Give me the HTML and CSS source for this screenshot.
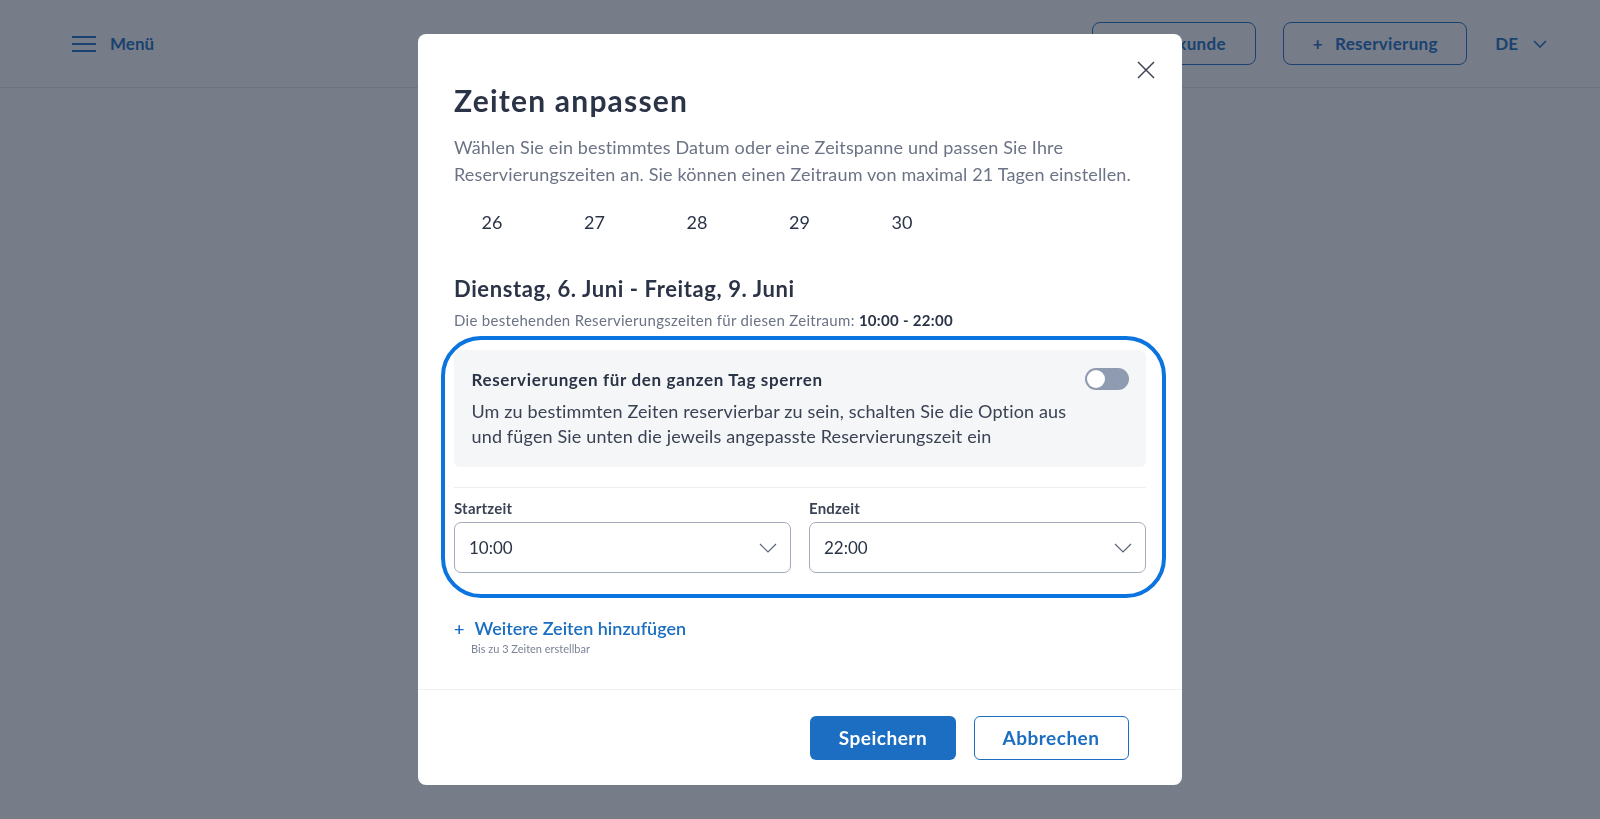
FILE: index.html
```html
<!DOCTYPE html>
<html lang="de">
<head>
  <meta charset="UTF-8">
  <meta name="viewport" content="width=device-width, initial-scale=1.0">
  <title>Zeiten anpassen</title>
  <link rel="stylesheet" href="styles.css">
</head>
<body>
  <!-- Kopfzeile der Seite -->
  <header class="topbar">
    <button class="menu-btn">
      <svg width="24" height="18" viewBox="0 0 24 18"><path d="M0 2h24M0 9h24M0 16h24" stroke="currentColor" stroke-width="2" fill="none"/></svg>
      <span>Menü</span>
    </button>
    <div class="topbar-actions">
      <button class="outline-btn btn-customer"><span class="plus">+</span>Neukunde</button>
      <button class="outline-btn btn-booking"><span class="plus">+</span>Reservierung</button>
      <button class="lang-btn">DE
        <svg width="14" height="8" viewBox="0 0 14 8"><path d="M1 1l6 6 6-6" stroke="currentColor" stroke-width="1.6" fill="none"/></svg>
      </button>
    </div>
  </header>

  <!-- Dialog -->
  <div class="overlay">
    <div class="modal">
      <button class="close-btn" aria-label="Schließen">
        <svg width="18" height="18" viewBox="0 0 18 18"><path d="M1 1l16 16M17 1L1 17" stroke="currentColor" stroke-width="1.5" fill="none"/></svg>
      </button>

      <div class="modal-body">
        <h1 class="modal-title">Zeiten anpassen</h1>
        <p class="modal-desc">Wählen Sie ein bestimmtes Datum oder eine Zeitspanne und passen Sie Ihre Reservierungszeiten an. Sie können einen Zeitraum von maximal 21 Tagen einstellen.</p>

        <div class="days">
          <span>26</span><span>27</span><span>28</span><span>29</span><span>30</span>
        </div>

        <h2 class="range-title">Dienstag, 6. Juni - Freitag, 9. Juni</h2>
        <p class="range-sub">Die bestehenden Reservierungszeiten für diesen Zeitraum: <strong>10:00 - 22:00</strong></p>

        <div class="highlight">
          <div class="block-box">
            <div class="block-head">
              <span class="block-title">Reservierungen für den ganzen Tag sperren</span>
              <span class="toggle"><span class="knob"></span></span>
            </div>
            <p class="block-text">Um zu bestimmten Zeiten reservierbar zu sein, schalten Sie die Option aus und fügen Sie unten die jeweils angepasste Reservierungszeit ein</p>
          </div>

          <div class="divider"></div>

          <div class="time-row">
            <div class="field">
              <label>Startzeit</label>
              <div class="select">10:00
                <svg width="18" height="10" viewBox="0 0 18 10"><path d="M1 1l8 8 8-8" stroke="currentColor" stroke-width="1.2" fill="none"/></svg>
              </div>
            </div>
            <div class="field">
              <label>Endzeit</label>
              <div class="select">22:00
                <svg width="18" height="10" viewBox="0 0 18 10"><path d="M1 1l8 8 8-8" stroke="currentColor" stroke-width="1.2" fill="none"/></svg>
              </div>
            </div>
          </div>
        </div>

        <a class="add-link" href="#"><span class="plus">+</span>Weitere Zeiten hinzufügen</a>
        <p class="add-hint">Bis zu 3 Zeiten erstellbar</p>
      </div>

      <div class="modal-footer">
        <button class="btn-primary">Speichern</button>
        <button class="btn-secondary">Abbrechen</button>
      </div>
    </div>
  </div>
</body>
</html>
```

FILE: styles.css
```css
/* Grundlayout */
body, html {
  margin: 0;
  padding: 0;
  height: 100%;
  font-family: Lato, "Liberation Sans", sans-serif;
  color: #2b3447;
  background: #fff;
  overflow: hidden;
}

button {
  font-family: inherit;
  background: none;
  border: none;
  padding: 0;
  cursor: pointer;
}

/* Kopfzeile */
.topbar {
  height: 87px;
  border-bottom: 1px solid #e3e6ec;
  display: flex;
  align-items: center;
  justify-content: space-between;
  padding: 0 53px 0 72px;
  color: #1b6ec2;
}

.menu-btn {
  display: flex;
  align-items: center;
  gap: 14px;
  color: #1b6ec2;
  font-size: 17px;
  font-weight: 700;
}

.topbar-actions {
  display: flex;
  align-items: center;
}

.outline-btn {
  height: 43px;
  border: 1px solid #1b6ec2;
  border-radius: 8px;
  color: #1b6ec2;
  font-size: 17px;
  font-weight: 700;
  letter-spacing: 0.3px;
  display: flex;
  align-items: center;
  justify-content: center;
}

.outline-btn .plus {
  margin-right: 12px;
}

.btn-customer {
  width: 164px;
  margin-right: 27px;
}

.btn-booking {
  width: 184px;
  margin-right: 28px;
}

.lang-btn {
  display: flex;
  align-items: center;
  gap: 15px;
  color: #1b6ec2;
  font-size: 17px;
  font-weight: 700;
}

/* Abgedunkelter Hintergrund */
.overlay {
  position: fixed;
  inset: 0;
  background: rgba(26, 36, 56, 0.6);
  display: flex;
  align-items: center;
  justify-content: center;
}

/* Dialogfenster */
.modal {
  position: relative;
  width: 764px;
  height: 751px;
  background: #fff;
  border-radius: 8px;
  display: flex;
  flex-direction: column;
  overflow: hidden;
}

.close-btn {
  position: absolute;
  top: 27px;
  right: 27px;
  width: 18px;
  height: 18px;
  color: #3a4254;
}

.close-btn svg {
  display: block;
}

.modal-body {
  flex: 1;
  padding: 48px 36px 0 36px;
}

.modal-title {
  margin: 0;
  font-size: 30px;
  line-height: 36px;
  font-weight: 700;
  letter-spacing: 1.2px;
  color: #2b3447;
}

.modal-desc {
  margin: 16px 0 0;
  font-size: 18px;
  line-height: 26.5px;
  letter-spacing: 0.15px;
  color: #6b7385;
}

.days {
  display: grid;
  grid-template-columns: repeat(5, 76px);
  column-gap: 26.5px;
  margin-top: 23px;
  font-size: 18px;
  line-height: 24px;
  color: #2b3447;
  text-align: center;
}

.range-title {
  margin: 41px 0 0;
  font-size: 22px;
  line-height: 28px;
  font-weight: 700;
  letter-spacing: 0.6px;
}

.range-sub {
  margin: 6.5px 0 0;
  font-size: 15px;
  line-height: 20px;
  letter-spacing: 0.3px;
  color: #6b7385;
}

.range-sub strong {
  color: #2b3447;
}

/* Markierter Bereich */
.highlight {
  position: relative;
  margin-top: 20.5px;
}

.highlight::after {
  content: "";
  position: absolute;
  top: -14px;
  left: -13px;
  right: -20px;
  bottom: -24.5px;
  border: 4px solid #0b74de;
  border-radius: 40px;
  pointer-events: none;
}

.block-box {
  background: #f5f6f8;
  border-radius: 6px;
  padding: 19px 17px 17.5px 17.5px;
}

.block-head {
  display: flex;
  justify-content: space-between;
  align-items: flex-start;
}

.block-title {
  font-size: 17px;
  line-height: 22px;
  font-weight: 700;
  letter-spacing: 0.65px;
}

.toggle {
  width: 44px;
  height: 22px;
  border-radius: 11px;
  background: #8f9bb0;
  margin-top: -1px;
  display: flex;
  align-items: center;
  padding: 0 2px;
  box-sizing: border-box;
}

.knob {
  width: 18px;
  height: 18px;
  border-radius: 50%;
  background: #fff;
}

.block-text {
  margin: 8px 0 0;
  max-width: 615px;
  font-size: 18px;
  line-height: 25px;
  letter-spacing: 0.15px;
  color: #3a4254;
}

.divider {
  height: 1px;
  background: #eceef2;
  margin-top: 20px;
}

.time-row {
  display: grid;
  grid-template-columns: 1fr 1fr;
  column-gap: 18px;
  margin-top: 10px;
}

.field label {
  display: block;
  font-size: 15px;
  line-height: 20px;
  font-weight: 700;
  letter-spacing: 0.2px;
  color: #3a4254;
}

.select {
  margin-top: 4.5px;
  height: 51px;
  box-sizing: border-box;
  border: 1px solid #a3abbb;
  border-radius: 7px;
  padding: 0 13px 0 14px;
  display: flex;
  align-items: center;
  justify-content: space-between;
  font-size: 17px;
  color: #2b3447;
}

.select svg {
  color: #5b6475;
}

.add-link {
  display: inline-block;
  margin-top: 43px;
  font-size: 18px;
  line-height: 24px;
  font-weight: 600;
  color: #1b6ec2;
  text-decoration: none;
}

.add-link .plus {
  margin-right: 10px;
}

.add-hint {
  margin: 1.5px 0 0 17px;
  font-size: 11px;
  line-height: 14px;
  color: #7a8294;
}

/* Fußzeile */
.modal-footer {
  height: 96px;
  border-top: 1px solid #eef0f3;
  box-sizing: border-box;
  padding: 0 53.5px 0 0;
  display: flex;
  justify-content: flex-end;
  align-items: center;
  gap: 17.5px;
}

.btn-primary {
  width: 146px;
  height: 44px;
  border-radius: 6px;
  background: #1b6ec2;
  color: #fff;
  font-size: 19px;
  font-weight: 700;
  letter-spacing: 0.5px;
}

.btn-secondary {
  width: 155px;
  height: 44px;
  border-radius: 6px;
  border: 1px solid #1b6ec2;
  color: #1b6ec2;
  font-size: 19px;
  font-weight: 700;
  letter-spacing: 0.5px;
}
```
